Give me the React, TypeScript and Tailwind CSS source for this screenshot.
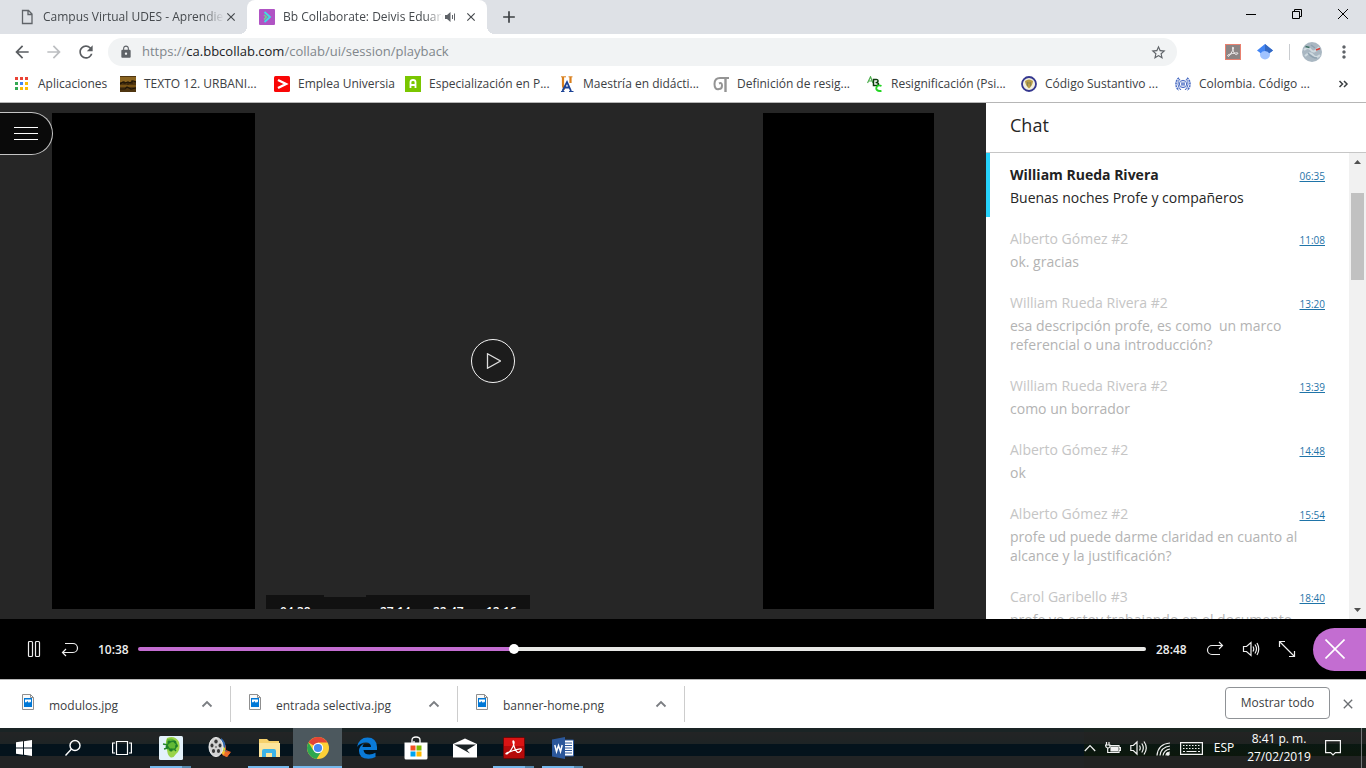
import type { ReactNode } from 'react'
import { useState } from 'react'
import clsx from 'clsx'
import {
  MdAdd,
  MdArrowBack,
  MdArrowForward,
  MdClose,
  MdLock,
  MdMoreVert,
  MdRefresh,
  MdStarBorder,
} from 'react-icons/md'

type Message = {
  author: string
  time: string
  text: string
  active?: boolean
}

const messages: Message[] = [
  { author: 'William Rueda Rivera', time: '06:35', text: 'Buenas noches Profe y compañeros', active: true },
  { author: 'Alberto Gómez #2', time: '11:08', text: 'ok. gracias' },
  { author: 'William Rueda Rivera #2', time: '13:20', text: 'esa descripción profe, es como  un marco referencial o una introducción?' },
  { author: 'William Rueda Rivera #2', time: '13:39', text: 'como un borrador' },
  { author: 'Alberto Gómez #2', time: '14:48', text: 'ok' },
  { author: 'Alberto Gómez #2', time: '15:54', text: 'profe ud puede darme claridad en cuanto al alcance y la justificación?' },
  { author: 'Carol Garibello #3', time: '18:40', text: 'profe yo estoy trabajando en el documento' },
]

const downloads = ['modulos.jpg', 'entrada selectiva.jpg', 'banner-home.png']

const DURATION = 1728

/* ---------- bookmark icons ---------- */

function AppsIcon() {
  const colors = ['#ea4335', '#ea4335', '#ea4335', '#34a853', '#4285f4', '#fbbc05', '#34a853', '#fbbc05', '#fbbc05']
  return (
    <svg width="15" height="16" viewBox="0 0 15 16">
      {colors.map((color, i) => (
        <rect key={i} x={(i % 3) * 5} y={1 + Math.floor(i / 3) * 5} width="3" height="3" fill={color} />
      ))}
    </svg>
  )
}

function TextoIcon() {
  return (
    <svg width="16" height="16" viewBox="0 0 16 16">
      <rect width="16" height="16" fill="#4f3510" />
      <rect y="1" width="16" height="5" fill="#8a6420" />
      <rect y="9" width="16" height="2" fill="#765214" />
      <path d="M0 8l3-2 2 1 3-1 2 1 3-2 3 1M0 13h5l2-2 4 2 5-1" stroke="#1f1507" strokeWidth="1.200" fill="none" />
      <path d="M4 5v3M12 4v4M8 6v3" stroke="#2b1c08" fill="none" />
    </svg>
  )
}

function UniversiaIcon() {
  return (
    <svg width="16" height="16" viewBox="0 0 16 16">
      <rect width="16" height="16" rx="1.5" fill="#f90606" />
      <path d="M4 4l8 4-8 4" stroke="#fff" strokeWidth="2.4" fill="none" />
    </svg>
  )
}

function AreandinaIcon() {
  return (
    <svg width="16" height="16" viewBox="0 0 16 16">
      <rect width="16" height="16" fill="#7ac600" />
      <path d="M5.500 12V6q0-2 2.500-2t2.500 2v6M5.500 9h5" stroke="#fff" strokeWidth="1.800" fill="none" />
    </svg>
  )
}

function UaIcon() {
  return (
    <svg width="16" height="16" viewBox="0 0 16 16">
      <path d="M4 1v8q0 3 2 4M11.500 1v6" stroke="#d9801e" strokeWidth="2.200" fill="none" />
      <path d="M2 .8h5M9.500.8h4" stroke="#d9801e" fill="none" />
      <path d="M3.500 15L8 6l4 9M5.500 11.500h5" stroke="#1c4396" strokeWidth="1.800" fill="none" />
      <path d="M2 15.500h3.500M10 15.500h4.500" stroke="#1c4396" fill="none" />
    </svg>
  )
}

function GtIcon() {
  return (
    <svg width="16" height="16" viewBox="0 0 16 16">
      <path d="M16 2H7Q1.500 2 1.500 8t4.500 5q3 0 3-3.500T6 7.500" stroke="#949494" strokeWidth="2" fill="none" />
      <path d="M12.500 2v14" stroke="#949494" strokeWidth="2.400" fill="none" />
    </svg>
  )
}

function AbcIcon() {
  return (
    <svg width="16" height="16" viewBox="0 0 16 16">
      <path d="M.5 7L3.500.8 6 7M1.500 5h4" stroke="#4fae4f" strokeWidth="1.200" fill="none" />
      <path d="M6.500 3.500v6h3q2 0 2-1.500t-3-1.500q2.500 0 2.500-1.600t-2-1.400z" stroke="#0c3d0c" strokeWidth="1.500" fill="none" />
      <path d="M14.500 10q-3-1.500-4.500.5t0 3.500 4.500.8" stroke="#24d624" strokeWidth="1.800" fill="none" />
    </svg>
  )
}

function CrestIcon() {
  return (
    <svg width="16" height="16" viewBox="0 0 16 16">
      <circle cx="8" cy="8" r="7" fill="#f1efdf" stroke="#34378f" strokeWidth="1.800" />
      <path d="M4 5q4-3 8 0-.5 5-4 7.500Q4.500 10 4 5z" fill="#b79c47" />
      <path d="M6.500 6v4M9.500 6v4M6 7h4" stroke="#8a8250" fill="none" />
    </svg>
  )
}

function IloIcon() {
  return (
    <svg width="16" height="16" viewBox="0 0 16 16" fill="none" stroke="#4a6cc3">
      <circle cx="8" cy="8" r="3.700" />
      <path d="M4 2Q1 4 1 8t3 6M12 2q3 2 3 6t-3 6" strokeWidth="1.600" strokeDasharray="2 .7" />
      <path d="M5 3Q2.500 5 3 8.500T6 14M11 3q2.500 2 2 5.500T10 14" />
      <path d="M7 5.500v5M9 5.500v5M6 8h4" />
    </svg>
  )
}

const bookmarks: { label: string; icon: ReactNode; width: string }[] = [
  { label: 'Aplicaciones', icon: <AppsIcon />, width: 'w-[105px]' },
  { label: 'TEXTO 12. URBANI...', icon: <TextoIcon />, width: 'w-[154px]' },
  { label: 'Emplea Universia', icon: <UniversiaIcon />, width: 'w-[131px]' },
  { label: 'Especialización en P...', icon: <AreandinaIcon />, width: 'w-[154px]' },
  { label: 'Maestría en didácti...', icon: <UaIcon />, width: 'w-[154px]' },
  { label: 'Definición de resig...', icon: <GtIcon />, width: 'w-[154px]' },
  { label: 'Resignificación (Psi...', icon: <AbcIcon />, width: 'w-[154px]' },
  { label: 'Código Sustantivo ...', icon: <CrestIcon />, width: 'w-[154px]' },
  { label: 'Colombia. Código ...', icon: <IloIcon />, width: 'w-[154px]' },
]

/* ---------- browser chrome ---------- */

function Tab({ title, icon, active, audible }: { title: string; icon: ReactNode; active?: boolean; audible?: boolean }) {
  return (
    <div
      className={clsx(
        'relative flex h-full w-60 items-center pl-3 pr-[9px]',
        active && 'rounded-t-lg bg-white',
      )}
    >
      {active && (
        <>
          <span className="absolute -left-2 bottom-0 size-2 bg-[radial-gradient(circle_at_0_0,transparent_8px,white_8px)]" />
          <span className="absolute -right-2 bottom-0 size-2 bg-[radial-gradient(circle_at_100%_0,transparent_8px,white_8px)]" />
        </>
      )}
      <span className="mr-2 shrink-0">{icon}</span>
      <span className="min-w-0 flex-1 overflow-hidden whitespace-nowrap text-xs text-[#45494d] [mask-image:linear-gradient(to_right,black_88%,transparent)]">
        {title}
      </span>
      {audible && (
        <svg className="shrink-0" width="12" height="12" viewBox="0 0 12 12">
          <path d="M1 4h2l3.500-3v10L3 8H1z" fill="#5f6368" />
          <path d="M8.500 4v4M10.500 2.500v7" stroke="#5f6368" fill="none" />
        </svg>
      )}
      <button className={clsx('shrink-0 text-[#45494d]', audible && 'ml-2')} aria-label="Cerrar pestaña">
        <MdClose size={14} />
      </button>
    </div>
  )
}

function TabStrip() {
  return (
    <div className="flex h-[34px] bg-[#dee1e6] pl-[7px]">
      <Tab
        title="Campus Virtual UDES - Aprendie"
        icon={
          <svg width="16" height="16" viewBox="0 0 16 16" fill="none" stroke="#5f6368" strokeWidth="1.300">
            <path d="M3.500 1.500h6l3.500 3.500v9.500H3.500zM9 1.500v4h4" />
          </svg>
        }
      />
      <Tab
        active
        audible
        title="Bb Collaborate: Deivis Eduard"
        icon={
          <svg width="16" height="16" viewBox="0 0 16 16" fill="none">
            <rect width="16" height="16" rx="1" fill="#b054c4" />
            <path d="M5.500 3l5.500 5-5.500 5" stroke="#3ee0e6" strokeWidth="1.800" />
            <path d="M5 6l2.500 2L5 10.500" stroke="#5fe08a" strokeWidth="1.500" />
          </svg>
        }
      />
      <button className="ml-3 text-[#3c4043]" aria-label="Nueva pestaña">
        <MdAdd size={20} />
      </button>
      <div className="ml-auto flex h-7">
        <button className="flex w-[46px] items-center justify-center" aria-label="Minimizar">
          <svg width="10" height="10" viewBox="0 0 10 10" stroke="#000"><path d="M0 5.500h10" /></svg>
        </button>
        <button className="flex w-[46px] items-center justify-center" aria-label="Restaurar">
          <svg width="10" height="10" viewBox="0 0 10 10" fill="none" stroke="#000">
            <path d="M.5 2.500h7v7h-7zM2.500 2.500v-2h7v7h-2" />
          </svg>
        </button>
        <button className="flex w-[46px] items-center justify-center" aria-label="Cerrar">
          <svg width="10" height="10" viewBox="0 0 10 10" stroke="#000"><path d="M0 0l10 10M10 0L0 10" /></svg>
        </button>
      </div>
    </div>
  )
}

function Toolbar() {
  return (
    <div className="flex h-9 items-center pl-3 pr-3">
      <button className="mr-3 text-[#5a5d61]" aria-label="Atrás"><MdArrowBack size={20} /></button>
      <button className="mr-3 text-[#bcbec1]" aria-label="Adelante"><MdArrowForward size={20} /></button>
      <button className="mr-3 text-[#5a5d61]" aria-label="Volver a cargar"><MdRefresh size={20} /></button>
      <div className="flex h-7 flex-1 items-center rounded-full bg-[#f1f3f4] pl-[11px] pr-2.5">
        <MdLock size={14} className="mr-[9px] text-[#5f6368]" />
        <div className="text-[13px] text-[#80868b]">
          https://<span className="text-[#202124]">ca.bbcollab.com</span>/collab/ui/session/playback
        </div>
        <button className="ml-auto text-[#5f6368]" aria-label="Marcar página"><MdStarBorder size={17} /></button>
      </div>
      <button className="ml-12" aria-label="Adobe Acrobat">
        <svg width="16" height="16" viewBox="0 0 16 16">
          <rect x=".5" y=".5" width="15" height="15" fill="#8b8484" stroke="#e8806f" />
          <path d="M3.500 12.500Q6 10 7.700 6.500T8 3t.5 4.500 4 2.500-5-.5-4 3z" stroke="#f0eeee" fill="none" />
        </svg>
      </button>
      <button className="ml-4" aria-label="Google Académico">
        <svg width="16" height="16" viewBox="0 0 16 16">
          <circle cx="8" cy="10.500" r="5" fill="#a0c3ff" />
          <path d="M8 0L0 6.500l3.700 2.800Q5 7 8 7t4.300 2.300L16 6.500z" fill="#4285f4" />
          <path d="M8 0l8 6.500-3.700 2.800Q11 7 8 7z" fill="#356ac3" />
        </svg>
      </button>
      <span className="mx-4 h-4 w-px bg-[#c9ccd0]" />
      <button className="-ml-1" aria-label="Perfil">
        <svg width="20" height="20" viewBox="0 0 20 20">
          <circle cx="10" cy="10" r="10" fill="#a9b7c2" />
          <path d="M2 8q4-4 7 0t8-3M3 14q5-5 8-1t7 0" stroke="#cfdae0" strokeWidth="2" fill="none" />
          <path d="M6 11q4 5 9 5M9 3l4 3" stroke="#8fa2b0" strokeWidth="1.500" fill="none" />
          <path d="M3.500 4.500l4 1" stroke="#3c6f63" strokeWidth="1.500" />
          <path d="M14 8l4-1.500" stroke="#d43c35" strokeWidth="1.500" />
        </svg>
      </button>
      <button className="ml-3 text-[#5f6368]" aria-label="Menú"><MdMoreVert size={20} /></button>
    </div>
  )
}

function BookmarksBar() {
  return (
    <nav className="flex h-[33px] border-b border-[#b6b6b6] pb-1 pl-[15px] pr-[17px] text-xs text-[#3c4043]">
      {bookmarks.map((item) => (
        <a key={item.label} href="#" className={clsx('flex items-center gap-2 whitespace-nowrap', item.width)}>
          <span className="shrink-0">{item.icon}</span>
          {item.label}
        </a>
      ))}
      <button className="ml-auto" aria-label="Más marcadores">
        <svg width="11" height="8" viewBox="0 0 11 8" fill="none" stroke="#3c4043" strokeWidth="1.500">
          <path d="M1.500 1l3 3-3 3M6 1l3 3-3 3" />
        </svg>
      </button>
    </nav>
  )
}

/* ---------- session playback ---------- */

function Stage() {
  return (
    <main className="relative flex min-w-0 flex-1 bg-[#262626] px-[52px] py-2.5">
      <div className="w-[203px] bg-black" />
      <div className="flex min-w-0 flex-1 flex-col justify-end pl-[11px]">
        <div className="flex h-3.5 w-66 items-end overflow-hidden text-xs font-semibold text-white">
          <span className="h-3.5 w-[58px] bg-[#111] pl-3.5 pt-[9px]">04:38</span>
          <span className="h-3 w-[42px] bg-[#111]" />
          <span className="h-3.5 w-[53px] bg-[#111] pl-3.5 pt-[9px]">27:14</span>
          <span className="h-3.5 w-[53px] bg-[#111] pl-3.5 pt-[9px]">22:47</span>
          <span className="h-3.5 flex-1 bg-[#111] pl-3.5 pt-[9px]">12:16</span>
        </div>
      </div>
      <div className="w-[171px] bg-black" />

      <button
        className="absolute left-0 top-[9px] flex h-[43px] w-[53px] items-center rounded-r-full border border-l-0 border-[#c4c4c4] bg-[#0a0a0a] pl-3.5"
        aria-label="Abrir menú de la sesión"
      >
        <svg width="24" height="13" viewBox="0 0 24 13" stroke="#fff">
          <path d="M0 .5h24M0 6.500h24M0 12.500h24" />
        </svg>
      </button>
      <button
        className="absolute left-1/2 top-1/2 flex size-11 -translate-1/2 items-center justify-center rounded-full border border-[#f4f4f4] bg-[#1c1c1c]"
        aria-label="Reproducir"
      >
        <svg width="16" height="16" viewBox="0 0 16 16" fill="none" stroke="#ddd" strokeWidth="1.300">
          <path d="M2.500.8v14.400L15.500 8z" />
        </svg>
      </button>
    </main>
  )
}

function ChatMessage({ message }: { message: Message }) {
  return (
    <li className={clsx('border-l-4 pb-2.5 pl-5 pr-6 pt-3 text-sm leading-[19px]', message.active ? 'border-[#26d2fb]' : 'border-transparent')}>
      <div className="flex items-end justify-between">
        <h3 className={message.active ? 'font-bold text-[#222]' : 'text-[#c5c5c5]'}>{message.author}</h3>
        <a href="#" className="text-[10px] leading-4 text-[#1f74a8] underline">{message.time}</a>
      </div>
      <p className={clsx('mt-1 whitespace-pre-wrap', message.active ? 'text-[#262626]' : 'text-[#b3b3b3]')}>{message.text}</p>
    </li>
  )
}

function ChatPanel() {
  return (
    <aside className="flex w-[380px] shrink-0 flex-col bg-white">
      <h2 className="flex h-[50px] shrink-0 items-center border-b border-[#c6c6c6] px-6 pb-1.5 text-lg text-[#262626]">Chat</h2>
      <div className="flex min-h-0 flex-1">
        <ul className="min-w-0 flex-1 overflow-hidden">
          {messages.map((message) => (
            <ChatMessage key={message.time} message={message} />
          ))}
        </ul>
        <div className="flex w-[17px] flex-col items-center bg-[#f1f1f1]">
          <svg width="17" height="17" viewBox="0 0 17 17"><path d="M5 11l3.500-4 3.500 4z" fill="#505050" /></svg>
          <div className="mt-[23px] h-[87px] w-[13px] bg-[#c1c1c1]" />
          <svg className="mt-auto" width="17" height="17" viewBox="0 0 17 17"><path d="M5 6l3.500 4L12 6z" fill="#505050" /></svg>
        </div>
      </div>
    </aside>
  )
}

function PlayerButton({ label, children }: { label: string; children: ReactNode }) {
  return (
    <button className="flex w-9 shrink-0 items-center justify-center" aria-label={label}>
      <svg width="18" height="18" viewBox="0 0 18 18" fill="none" stroke="#eee" strokeWidth="1.200">
        {children}
      </svg>
    </button>
  )
}

function PlayerBar() {
  const [position, setPosition] = useState(642)
  const percent = (position / DURATION) * 100
  return (
    <div className="flex h-[60px] items-center bg-black pl-4 text-xs font-semibold text-[#eee]">
      <PlayerButton label="Pausa">
        <rect x="3.500" y="1.500" width="4" height="15" rx="1" />
        <rect x="10.500" y="1.500" width="4" height="15" rx="1" />
      </PlayerButton>
      <PlayerButton label="Retroceder">
        <path d="M4 3.500h8a4.500 4.500 0 0 1 0 9H1.500M5 9l-3.500 3.500L5 16" />
      </PlayerButton>
      <span className="ml-2.5 w-10 pt-px">10:38</span>
      <input
        type="range"
        aria-label="Posición de la grabación"
        min={0}
        max={DURATION}
        value={position}
        onChange={(e) => setPosition(Number(e.target.value))}
        style={{ backgroundImage: `linear-gradient(to right, #c36dd1 ${percent}%, #e8e8e6 ${percent}%)` }}
        className="h-1 min-w-0 flex-1 appearance-none rounded-full [&::-webkit-slider-thumb]:size-2.5 [&::-webkit-slider-thumb]:appearance-none [&::-webkit-slider-thumb]:rounded-full [&::-webkit-slider-thumb]:bg-white"
      />
      <span className="ml-2.5 w-[41px] pt-px">28:48</span>
      <PlayerButton label="Avanzar">
        <path d="M16.500 5.500H6a4.500 4.500 0 0 0 0 9h8M13 2l3.500 3.500L13 9" />
      </PlayerButton>
      <PlayerButton label="Volumen">
        <path d="M1.500 6.500h3l4.500-4v13l-4.500-4h-3z" />
        <path d="M11 6.500q1.500 2.500 0 5M13 4.500q3 4.500 0 9M15 3q3.500 6 0 12" />
      </PlayerButton>
      <PlayerButton label="Pantalla completa">
        <path d="M1.500 7V1.500H7M1.500 1.500l15 15M11 16.500h5.500V11" />
      </PlayerButton>
      <button className="ml-2 flex h-[43px] w-[53px] items-center rounded-l-full bg-[#c36dd1] pl-3" aria-label="Cerrar panel">
        <svg width="20" height="20" viewBox="0 0 20 20" stroke="#fff" strokeWidth="1.600">
          <path d="M.5.5l19 19M19.500.5l-19 19" />
        </svg>
      </button>
    </div>
  )
}

function DownloadsBar() {
  return (
    <div className="flex h-[49px] items-center border-t border-[#b6b6b6] bg-white pr-2.5 text-[#3c4043]">
      {downloads.map((name, i) => (
        <div key={name} className={clsx('flex h-9 items-center border-r border-[#cdcdcd] pr-[17px]', i === 0 ? 'w-[231px] pl-[22px]' : 'w-[227px] pl-[18px]')}>
          <svg className="mb-1 mr-[15px] shrink-0" width="12" height="16" viewBox="0 0 12 16">
            <path d="M.5.500h8l3 3v12H.5z" fill="#fafafa" stroke="#8f8f8f" />
            <path d="M8.500.5v3h3" stroke="#8f8f8f" fill="none" />
            <rect x="2" y="4" width="8" height="9" fill="#0078d7" />
            <path d="M3 5.500h6v3L8 7.500 7 9 5.500 7 4 8.500 3 8z" fill="#fff" />
          </svg>
          <span className="whitespace-nowrap pt-1 text-xs">{name}</span>
          <button className="ml-auto" aria-label="Opciones de descarga">
            <svg width="12" height="8" viewBox="0 0 12 8" fill="none" stroke="#7b7e82" strokeWidth="1.800">
              <path d="M1.500 6.500L6 2l4.500 4.500" />
            </svg>
          </button>
        </div>
      ))}
      <button className="mb-0.5 ml-auto h-8 w-[105px] rounded border border-[#8f9296] text-xs font-medium">Mostrar todo</button>
      <button className="ml-2.5 text-[#6b6e72]" aria-label="Cerrar barra de descargas"><MdClose size={16} /></button>
    </div>
  )
}

/* ---------- taskbar ---------- */

const taskIcons: { label: string; running?: boolean; split?: boolean; current?: boolean; icon: ReactNode }[] = [
  {
    label: 'Inicio',
    icon: (
      <svg width="16" height="16" viewBox="0 0 16 16" fill="#fff">
        <path d="M0 2.300l7-1v6.200H0zM8 1.200L16 0v7.500H8zM0 8.500h7v6.200l-7-1zM8 8.500h8V16l-8-1.200z" />
      </svg>
    ),
  },
  {
    label: 'Buscar',
    icon: (
      <svg width="18" height="18" viewBox="0 0 18 18" fill="none" stroke="#fff" strokeWidth="1.400">
        <circle cx="11" cy="6.500" r="5" />
        <path d="M7.500 10L1.500 16.500" />
      </svg>
    ),
  },
  {
    label: 'Vista de tareas',
    icon: (
      <svg width="20" height="16" viewBox="0 0 20 16" fill="none" stroke="#fff" strokeWidth="1.200">
        <path d="M4.500 1.500h11v13h-11zM3 3H.6v10H3M17 3h2.400v10H17" />
      </svg>
    ),
  },
  {
    label: 'Red de contactos',
    running: true,
    split: true,
    icon: (
      <svg width="24" height="24" viewBox="0 0 24 24">
        <rect width="24" height="24" rx="1.500" fill="#e4f2fb" />
        <path d="M8 2q8-3 12 4 2 8-3 12-3 5-6 3-3-3-3-8-2-6 0-11z" fill="#9ad44a" />
        <path d="M8 3q7-2 10 4 1 6-4 8-6 1-7-5z" fill="#62ba35" />
        <path d="M10 6l5-1 3 4-2 4-5 .5-3-3.500zM4 8l5 1M5 13l4-1M15 13l2 2" stroke="#23862b" strokeWidth="1.300" fill="none" />
        <g fill="#1f7d2a">
          <circle cx="10" cy="6" r="1.500" />
          <circle cx="16" cy="6" r="1.300" />
          <circle cx="17.500" cy="10" r="1.300" />
          <circle cx="8" cy="11" r="1.500" />
          <circle cx="12" cy="14" r="1.600" />
        </g>
      </svg>
    ),
  },
  {
    label: 'Movie Maker',
    icon: (
      <svg width="24" height="24" viewBox="0 0 24 24">
        <path d="M12 4q7 4 6 10l5 2-4 5q-7-2-7-9z" fill="#e85c23" />
        <path d="M13 2q6 4 4 12l4 3-4 3q-5-2-6-9z" fill="#3166aa" />
        <path d="M14 10l3 2v3l-3-1z" fill="#c8df3f" />
        <path d="M17 15l5 2-3 4-5-2z" fill="#ef6e2a" />
        <path d="M14 14l3 1-1 4-3-2z" fill="#f6c32c" />
        <ellipse cx="8" cy="11" rx="7" ry="9.500" fill="#d2d2d2" stroke="#f2f2f2" />
        <g fill="#383838">
          <ellipse cx="8" cy="5.500" rx="1.700" ry="2" />
          <ellipse cx="4" cy="9.500" rx="1.500" ry="2" />
          <ellipse cx="12" cy="9.500" rx="1.500" ry="2" />
          <ellipse cx="5.500" cy="15" rx="1.600" ry="2" />
          <ellipse cx="10.500" cy="15" rx="1.600" ry="2" />
          <circle cx="8" cy="11" r=".8" />
        </g>
      </svg>
    ),
  },
  {
    label: 'Explorador de archivos',
    running: true,
    icon: (
      <svg width="22" height="20" viewBox="0 0 22 20">
        <path d="M1 1h8l2 2h10v16H1z" fill="#f6d06b" />
        <path d="M1 5h21v14H1z" fill="#fde59c" />
        <path d="M4 19v-6q0-2 2-2h10q2 0 2 2v6h-4v-4H8v4z" fill="#3cb4e8" />
      </svg>
    ),
  },
  {
    label: 'Google Chrome',
    running: true,
    current: true,
    icon: (
      <svg width="22" height="22" viewBox="0 0 22 22">
        <circle cx="11" cy="11" r="11" fill="#fdd037" />
        <path d="M11 11L1.500 5.500A11 11 0 0 1 20.500 5.500H11z" fill="#e24436" />
        <path d="M1.500 5.500a11 11 0 0 0 8 16.400L15 13.500 11 11 6 13z" fill="#2da750" />
        <circle cx="11" cy="11" r="5.200" fill="#fff" />
        <circle cx="11" cy="11" r="4.100" fill="#4688f1" />
      </svg>
    ),
  },
  {
    label: 'Microsoft Edge',
    icon: (
      <svg width="22" height="22" viewBox="0 0 22 22">
        <path d="M1 10Q3 .5 11.500.5 20.500.5 21 10v3H7.500q.5 4.500 6 4.500 3 0 6-1.700V20q-3 1.800-7 1.800Q3 21.500 3 14q0-5 5-7.500-1.500 1.500-1.500 3.500H15q0-4.500-5-4.500Q4 5.500 1 10z" fill="#0a7ad8" />
      </svg>
    ),
  },
  {
    label: 'Microsoft Store',
    icon: (
      <svg width="24" height="24" viewBox="0 0 24 24">
        <path d="M8 7V4q0-3 4-3t4 3v3M10 7V5" stroke="#fff" strokeWidth="1.300" fill="none" />
        <path d="M.5 6.500h23V22q0 1.500-1.500 1.500H2Q.5 23.500.5 22z" fill="#fff" />
        <path d="M6.500 9.500h5v5h-5z" fill="#f25022" />
        <path d="M12.500 9.500h5v5h-5z" fill="#7fba00" />
        <path d="M6.500 15.500h5v5h-5z" fill="#00a4ef" />
        <path d="M12.500 15.500h5v5h-5z" fill="#ffb900" />
      </svg>
    ),
  },
  {
    label: 'Correo',
    icon: (
      <svg width="24" height="20" viewBox="0 0 24 20">
        <path d="M0 6l12-5.500L24 6v13.500H0z" fill="#fff" />
        <path d="M1 6.500h22l-9 5.500 3 3.500z" fill="#1b2326" />
      </svg>
    ),
  },
  {
    label: 'Adobe Reader',
    running: true,
    split: true,
    icon: (
      <svg width="22" height="22" viewBox="0 0 22 22">
        <rect x=".5" y=".5" width="21" height="21" rx="1" fill="#b50a0a" stroke="#6b0808" />
        <rect x="1" y="1" width="20" height="8" fill="#da1414" />
        <path d="M4 17q4-3 6-7.500T10.500 4t1 6.500 6 3.500-7-.5T4 17z" stroke="#fff" strokeWidth="1.200" fill="none" />
      </svg>
    ),
  },
  {
    label: 'Word',
    running: true,
    split: true,
    icon: (
      <svg width="22" height="22" viewBox="0 0 22 22">
        <path d="M11 3h10.500v16H11z" fill="#fff" stroke="#2b579a" />
        <path d="M13 6h7M13 8.500h7M13 11h7M13 13.500h7M13 16h7" stroke="#2b579a" />
        <path d="M0 2.500L13 0v22L0 19.500z" fill="#2b579a" />
        <path d="M2.800 8l1.700 6.500L6.500 8.500l2 6L10.200 8" stroke="#fff" strokeWidth="1.500" fill="none" />
      </svg>
    ),
  },
]

function TrayIcon({ label, width, children }: { label: string; width: number; children: ReactNode }) {
  return (
    <button aria-label={label}>
      <svg width={width} height="16" viewBox={`0 0 ${width} 16`} fill="none" stroke="#f2f2f2" strokeWidth="1.200">
        {children}
      </svg>
    </button>
  )
}

function Taskbar() {
  return (
    <footer className="flex h-10 bg-[linear-gradient(to_bottom,#1a2425_4px,#232425_4px,#1e2425_16px,#04131c_16px,#04131c_28px,#222425_28px)] text-xs text-white">
      <div className="flex">
        {taskIcons.map((item, i) => (
          <button
            key={item.label}
            aria-label={item.label}
            className={clsx(
              'relative flex items-center justify-center',
              item.current && 'bg-[#4c585e]',
              i === 0 ? 'w-12' : 'w-[49px]',
            )}
          >
            {item.icon}
            {item.running && (
              <span className={clsx('absolute bottom-0 flex h-0.5 bg-[#76b9ed]', item.current ? 'inset-x-0' : 'inset-x-1')}>
                {item.split && <span className="ml-auto w-[9px] bg-[#5689ae]" />}
              </span>
            )}
          </button>
        ))}
      </div>
      <div className="ml-auto flex items-center bg-[linear-gradient(to_bottom,#1b2622_4px,#232323_4px,#1f2321_16px,#0a1812_16px,#0c170c_28px,#222322_28px)]">
        <div className="flex items-center gap-[9px]">
          <TrayIcon label="Mostrar iconos ocultos" width={12}><path d="M.8 11L6 5.500 11.200 11" /></TrayIcon>
          <TrayIcon label="Batería" width={16}>
            <path d="M4.500 5.500h9.500v7H4M14.500 7.500h1v3h-1" />
            <path d="M6 7h6.500v4H6z" fill="#f2f2f2" />
            <path d="M1.500 2v3M4 2v3M.5 5h4.500v2L3.500 8h-1L1 7zM2.700 8v4.500h2" />
          </TrayIcon>
          <TrayIcon label="Volumen" width={17}>
            <path d="M.8 5.500h2.500L7 2v12L3.300 10.500H.8zM9.500 5.500q1.500 2.500 0 5M11.800 3.500q3 4.500 0 9M14 1.500q4.500 6.500 0 13" />
          </TrayIcon>
          <TrayIcon label="Red" width={15}>
            <path d="M1 15.500Q2 4 14 3M4 15.500Q5 7 14 6M7 15.500q1-5.500 7-6.500" />
            <path d="M10 15.500q0-3 4-3.500" />
            <circle cx="12" cy="14" r="1.200" fill="#f2f2f2" />
          </TrayIcon>
          <TrayIcon label="Teclado" width={23}>
            <path d="M.6 2.600h21.800v11.800H.6z" />
            <path d="M3 5.500h17M3 8.500h17" strokeDasharray="1.500 1.500" />
            <path d="M3 11.500h2M6.500 11.500h10M18 11.500h2" />
          </TrayIcon>
        </div>
        <button className="w-[42px]">ESP</button>
        <div className="w-[68px] text-center leading-[18px]">
          <div>8:41 p. m.</div>
          <div>27/02/2019</div>
        </div>
        <button className="ml-3 mr-5" aria-label="Centro de actividades">
          <svg width="16" height="16" viewBox="0 0 16 16" fill="none" stroke="#f2f2f2" strokeWidth="1.200">
            <path d="M.6.600h14.800v12h-5L8 15l-2.400-2.400h-5z" />
          </svg>
        </button>
        <span className="mr-1 h-full w-px bg-[#75787a]" />
      </div>
    </footer>
  )
}

export default function App() {
  return (
    <div className="flex h-screen flex-col overflow-hidden bg-white font-['Open_Sans','Noto_Sans',sans-serif]">
      <header>
        <TabStrip />
        <Toolbar />
        <BookmarksBar />
      </header>
      <div className="flex min-h-0 flex-1">
        <Stage />
        <ChatPanel />
      </div>
      <PlayerBar />
      <DownloadsBar />
      <Taskbar />
    </div>
  )
}
